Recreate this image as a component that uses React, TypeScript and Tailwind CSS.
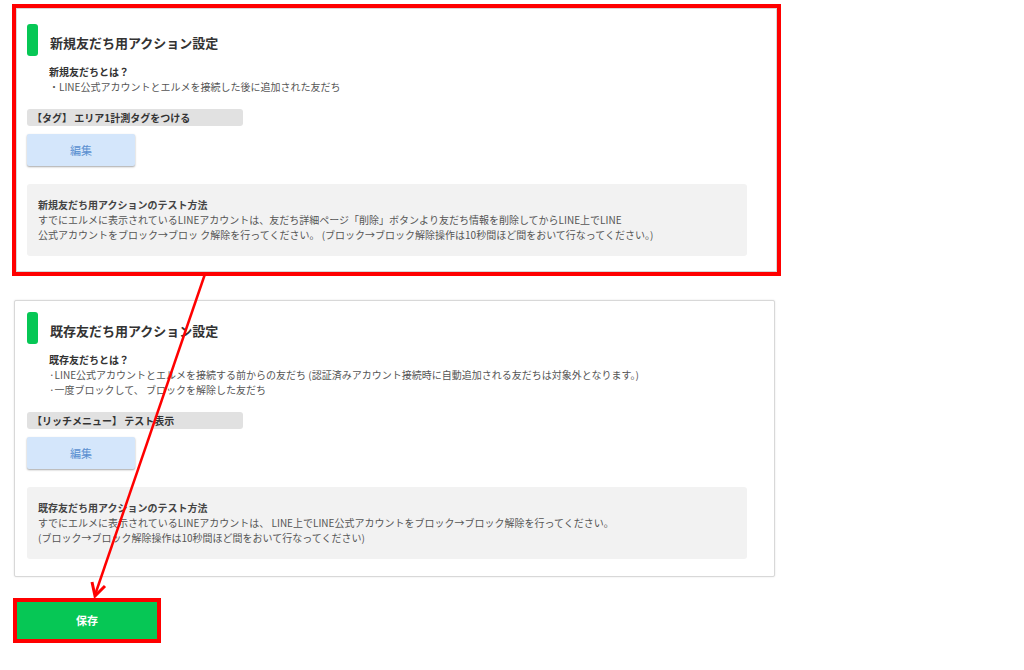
const font = { fontFamily: '"Noto Sans CJK JP", "Noto Sans", sans-serif' };

type CardProps = {
  title: string;
  subtitle: string;
  lines: string[];
  tag: string;
  infoTitle: string;
  infoLines: string[];
};

const ActionCard = ({ title, subtitle, lines, tag, infoTitle, infoLines }: CardProps) => {
  return (
    <div className="flex flex-col">
      {/* 見出し */}
      <div className="flex flex-row items-center gap-[12px]">
        <span className="w-[11px] h-[32px] rounded-[3px] bg-[#06c755]" />
        <span className="pt-[5px] text-[13px] font-bold text-[#333] leading-[16px]">{title}</span>
      </div>

      {/* 説明 */}
      <div className="flex flex-col ml-[22px] mt-[8px] text-[10px] leading-[15px] text-[#555]">
        <span className="font-bold text-[#333]">{subtitle}</span>
        {lines.map((l) => (
          <span key={l}>{l}</span>
        ))}
      </div>

      {/* タグ */}
      <div className="mt-[15px] w-[216px] h-[17px] rounded-[3px] bg-[#e1e1e1] px-[5px] flex items-center text-[10px] font-bold text-[#333]">
        {tag}
      </div>

      <button className="mt-[8px] w-[108px] h-[32px] rounded-[2px] bg-[#d4e6fb] shadow-[0_1px_2px_rgba(0,0,0,0.35)] text-[11px] text-[#5a8fd0]">
        編集
      </button>

      {/* テスト方法 */}
      <div className="mt-[18px] w-[720px] rounded-[3px] bg-[#f2f2f2] px-[11px] pt-[13px] pb-[14px] text-[10px] leading-[15px] text-[#555]">
        <div className="font-bold text-[#444]">{infoTitle}</div>
        {infoLines.map((l) => (
          <div key={l}>{l}</div>
        ))}
      </div>
    </div>
  );
};

export default function App() {
  return (
    <div className="relative w-[1024px] h-[670px] bg-white" style={font}>
      <div className="flex flex-col pt-[8px]">
        {/* 新規友だち */}
        <div className="ml-[16px] w-[761px] h-[264px] border border-[#d8d8d8] outline-4 outline-[#ff0000] bg-white pt-[15px] px-[10px] pb-[14px]">
          <ActionCard
            title="新規友だち用アクション設定"
            subtitle="新規友だちとは？"
            lines={["・LINE公式アカウントとエルメを接続した後に追加された友だち"]}
            tag="【タグ】 エリア1計測タグをつける"
            infoTitle="新規友だち用アクションのテスト方法"
            infoLines={[
              "すでにエルメに表示されているLINEアカウントは、友だち詳細ページ「削除」ボタンより友だち情報を削除してからLINE上でLINE",
              "公式アカウントをブロック→ブロッ ク解除を行ってください。 (ブロック→ブロック解除操作は10秒間ほど間をおいて行なってください。)",
            ]}
          />
        </div>

        {/* 既存友だち */}
        <div className="ml-[14px] mt-[28px] w-[761px] h-[277px] border border-[#d8d8d8] shadow-[0_0_2px_rgba(0,0,0,0.12)] rounded-[2px] bg-white pt-[11px] px-[12px]">
          <ActionCard
            title="既存友だち用アクション設定"
            subtitle="既存友だちとは？"
            lines={[
              "·LINE公式アカウントとエルメを接続する前からの友だち (認証済みアカウント接続時に自動追加される友だちは対象外となります。)",
              "·一度ブロックして、 ブロックを解除した友だち",
            ]}
            tag="【リッチメニュー】 テスト表示"
            infoTitle="既存友だち用アクションのテスト方法"
            infoLines={[
              "すでにエルメに表示されているLINEアカウントは、 LINE上でLINE公式アカウントをブロック→ブロック解除を行ってください。",
              "(ブロック→ブロック解除操作は10秒間ほど間をおいて行なってください)",
            ]}
          />
        </div>

        {/* 保存 */}
        <button className="ml-[17px] mt-[25px] w-[140px] h-[37px] bg-[#06c755] outline-4 outline-[#ff0000] shadow-[0_2px_1px_rgba(0,0,0,0.3)] text-[11px] font-bold text-white">
          保存
        </button>
      </div>

      {/* 注釈の矢印 */}
      <svg className="absolute left-0 top-0 pointer-events-none" width="1024" height="670">
        <line x1="205" y1="274" x2="95" y2="595" stroke="#ff0000" strokeWidth="2.5" />
        <polyline points="92,582 95,596 105,586" fill="none" stroke="#ff0000" strokeWidth="3" strokeLinejoin="miter" />
      </svg>
    </div>
  );
}
